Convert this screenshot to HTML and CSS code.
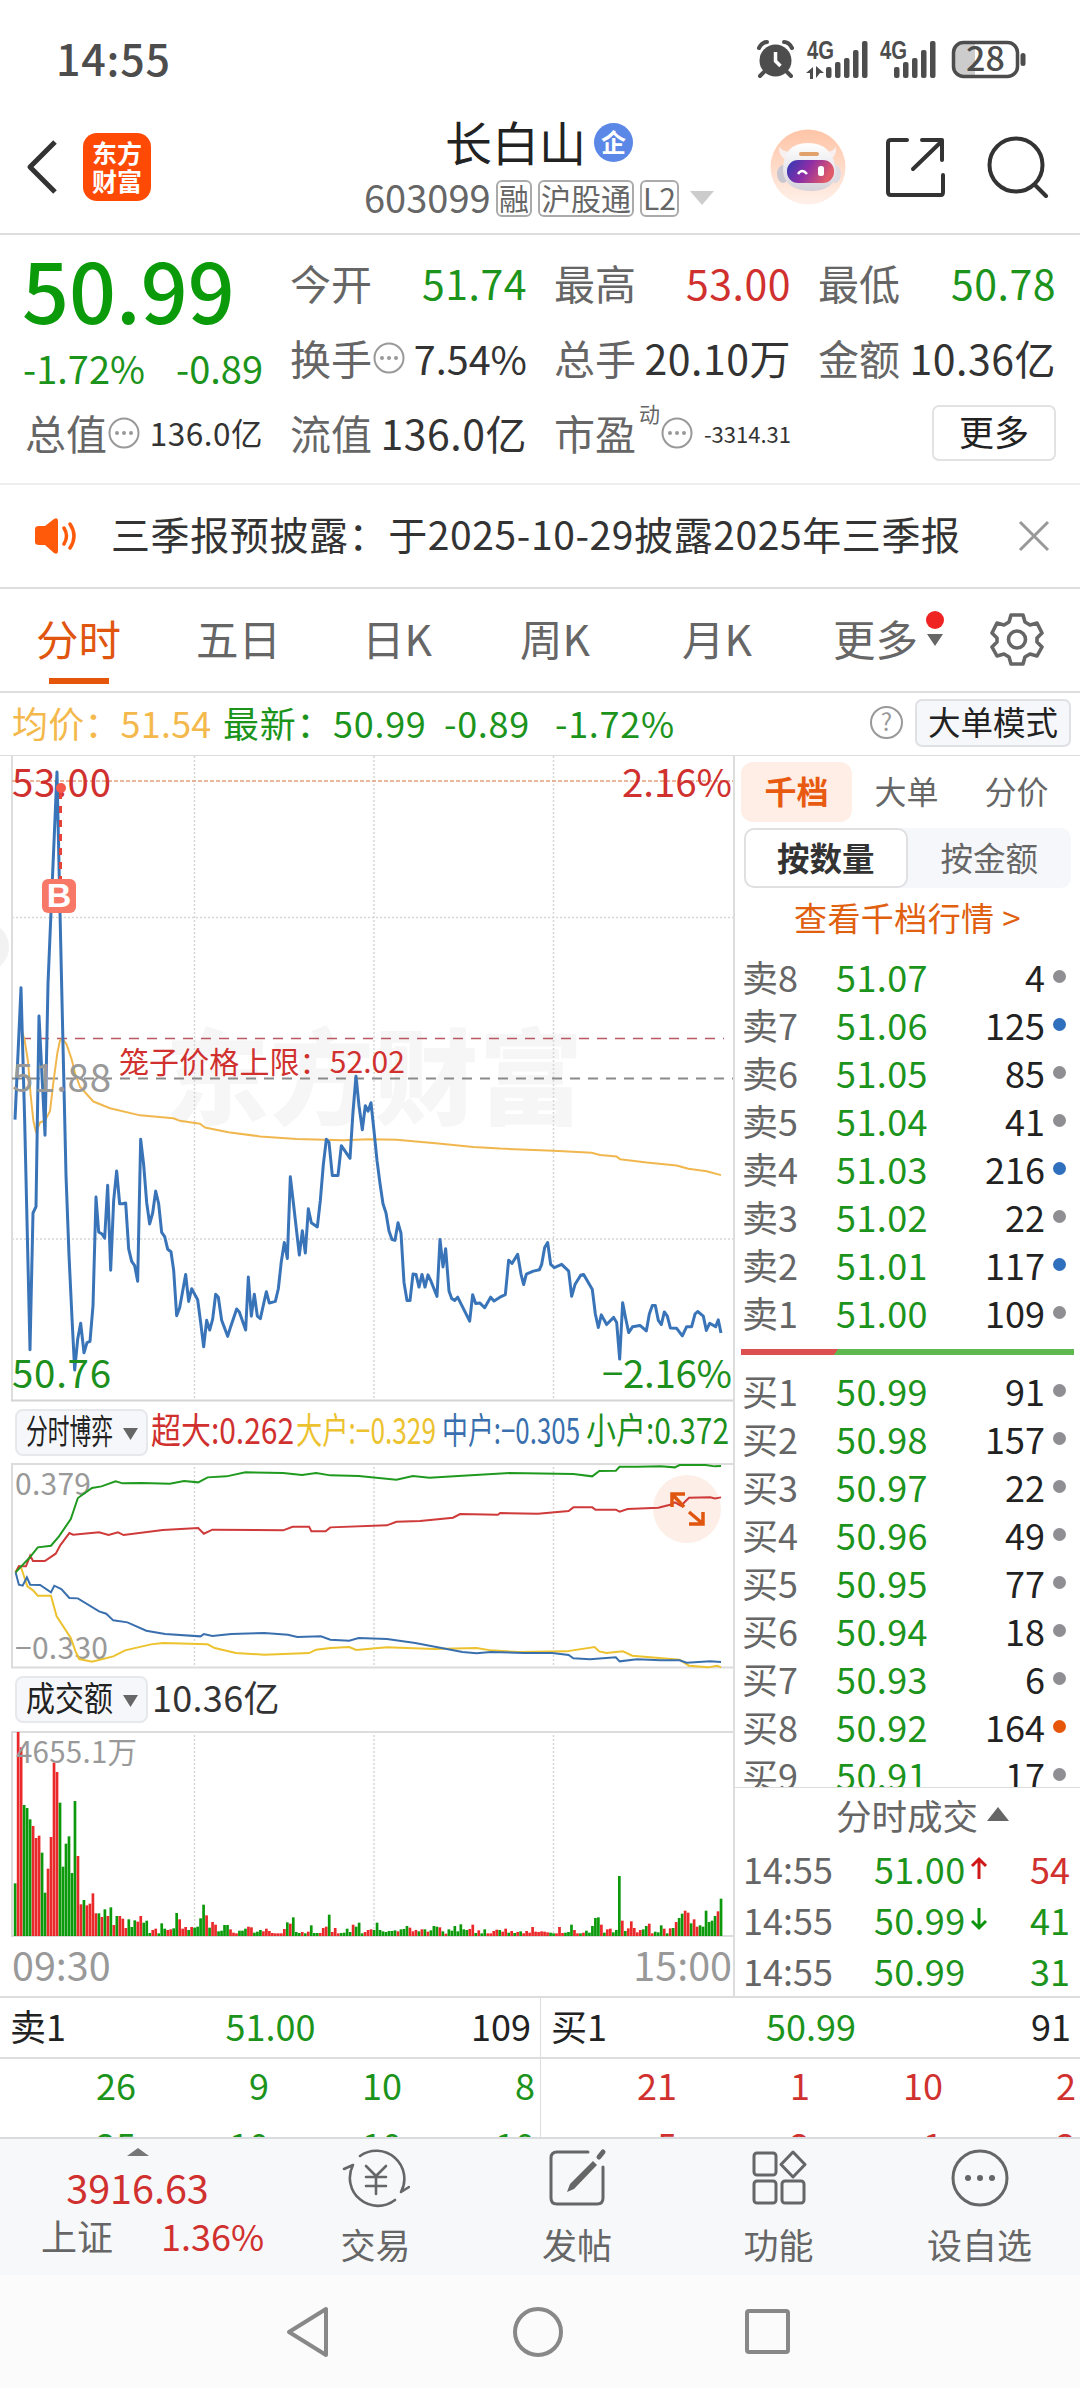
FILE: index.html
```html
<!DOCTYPE html>
<html lang="zh-CN">
<head>
<meta charset="utf-8">
<title>长白山 603099</title>
<link rel="stylesheet" href="styles.css">
</head>
<body>
<div class="status">
  <span class="clock">14:55</span>
  <svg class="status-icons" width="280" height="46" viewBox="0 0 280 46">
    <g fill="#4d4d4d">
      <circle cx="20.500" cy="21.500" r="16"/>
      <g fill="none" stroke="#4d4d4d" stroke-width="4" stroke-linecap="round"><path d="M4 9q3-6 8-6M29 3q5 0 8 6M9 33l-4 4M32 33l4 4"/></g>
      <path d="M20.500 13v9l5 5" fill="none" stroke="#fff" stroke-width="3.500"/>
      <text x="52" y="20" class="net" textLength="27" lengthAdjust="spacingAndGlyphs">4G</text>
      <text x="125" y="20" class="net" textLength="27" lengthAdjust="spacingAndGlyphs">4G</text>
      <path d="M51 34l7-6v12h-3v-6zM61 27l8 7h-4l-4 5z"/>
      <g><rect x="71" y="28" width="5.500" height="11" rx="2"/><rect x="80" y="23" width="5.500" height="16" rx="2"/><rect x="89" y="19" width="5.500" height="20" rx="2"/><rect x="98" y="11" width="5.500" height="28" rx="2"/><rect x="107" y="2" width="5.500" height="37" rx="2"/></g>
      <g><rect x="139" y="28" width="5.500" height="11" rx="2"/><rect x="148" y="23" width="5.500" height="16" rx="2"/><rect x="157" y="19" width="5.500" height="20" rx="2"/><rect x="166" y="11" width="5.500" height="28" rx="2"/><rect x="175" y="2" width="5.500" height="37" rx="2"/></g>
      <path d="M208 4h12v33h-12q-8 0-9-8v-17q1-8 9-8z" fill="#ccc"/>
      <rect x="198.500" y="3.500" width="64" height="34" rx="10" fill="none" stroke="#4d4d4d" stroke-width="3.500"/>
      <rect x="265.500" y="14" width="5" height="13" rx="2.500"/>
      <text x="211" y="32" class="batt" textLength="39">28</text>
    </g>
  </svg>
</div>

<header class="top">
  <div class="top-left">
    <svg width="32" height="56" viewBox="0 0 32 56"><path d="M29 3L4 28l25 25" fill="none" stroke="#333" stroke-width="5" stroke-linejoin="round"/></svg>
    <div class="logo"><span>东方</span><span>财富</span></div>
  </div>
  <div class="top-mid">
    <div class="name">长白山<span class="badge">企</span></div>
    <div class="code"><span class="num">603099</span><i>融</i><i>沪股通</i><i>L2</i><svg width="24" height="16" viewBox="0 0 24 16"><path d="M0 1h24L12 15z" fill="#ccc"/></svg></div>
  </div>
  <div class="top-right">
    <svg width="76" height="76" viewBox="0 0 76 76">
      <defs>
        <linearGradient id="halo" x1="0" y1="0" x2="0" y2="1"><stop offset="0" stop-color="#ffc4a6"/><stop offset="1" stop-color="#fff1ea"/></linearGradient>
        <linearGradient id="visor" x1="0" y1="0" x2="1" y2=".3"><stop offset="0" stop-color="#2b3bb5"/><stop offset=".5" stop-color="#8d2da6"/><stop offset="1" stop-color="#e05a6a"/></linearGradient>
        <linearGradient id="shell" x1="0" y1="0" x2="0" y2="1"><stop offset="0" stop-color="#fff"/><stop offset="1" stop-color="#d5d2da"/></linearGradient>
      </defs>
      <circle cx="38" cy="38" r="37.500" fill="url(#halo)"/>
      <path d="M9 18q0 12 10 13l8-9q-12 3-18-4zM66 18q1 11-8 12l-6-8q9 3 14-4z" fill="#f8f0ef"/>
      <ellipse cx="13" cy="45" rx="6" ry="9" fill="#c9c6d0"/><ellipse cx="65" cy="45" rx="6" ry="9" fill="#dedbe2"/>
      <path d="M13 42q0-28 25-28t28 28q0 19-24 20-27 0-29-20z" fill="url(#shell)"/>
      <rect x="29" y="23" width="20" height="4" rx="2" fill="#e2a06a"/>
      <rect x="17" y="31" width="47" height="23" rx="11" fill="url(#visor)"/>
      <path d="M28 45q4-6 9 0" fill="none" stroke="#fff" stroke-width="2.500"/><rect x="48" y="37" width="6" height="10" rx="2.500" fill="#fff"/>
    </svg>
    <svg class="share" width="60" height="60" viewBox="0 0 60 60"><g fill="none" stroke="#333" stroke-width="4" stroke-linecap="round" stroke-linejoin="round"><path d="M22 3H6q-3 0-3 3v49q0 3 3 3h50q2 0 2-3V38M37 3h20v20M57 4L28 32"/></g></svg>
    <svg class="find" width="62" height="62" viewBox="0 0 62 62"><g fill="none" stroke="#333" stroke-width="4" stroke-linecap="round"><circle cx="29" cy="29" r="26.500"/><path d="M48 49l11 11"/></g></svg>
  </div>
</header>

<section class="quote">
  <div class="last">
    <div class="price">50.99</div>
    <div class="chg"><span>-1.72%</span><span>-0.89</span></div>
  </div>
  <div class="cell"><b>今开</b><em class="g">51.74</em></div>
  <div class="cell"><b>最高</b><em class="r">53.00</em></div>
  <div class="cell"><b>最低</b><em class="g">50.78</em></div>
  <div class="cell"><b>换手</b><svg class="dots" viewBox="0 0 32 32"><use href="#more-dots"/></svg><em class="turn">7.54%</em></div>
  <div class="cell"><b>总手</b><em>20.10万</em></div>
  <div class="cell"><b>金额</b><em>10.36亿</em></div>
  <div class="cell"><b>总值</b><svg class="dots" viewBox="0 0 32 32"><use href="#more-dots"/></svg><em class="mid">136.0亿</em></div>
  <div class="cell"><b>流值</b><em>136.0亿</em></div>
  <div class="cell"><b>市盈</b><sup>动</sup><svg class="dots" viewBox="0 0 32 32"><g id="more-dots" fill="#999"><circle cx="16" cy="16" r="14.500" fill="none" stroke="#999" stroke-width="2"/><circle cx="9" cy="16" r="2"/><circle cx="16" cy="16" r="2"/><circle cx="23" cy="16" r="2"/></g></svg><em class="small">-3314.31</em></div>
  <div class="cell end"><span class="more-btn">更多</span></div>
</section>

<section class="notice">
  <svg width="46" height="38" viewBox="0 0 46 38"><path d="M2 12q0-3 4-3h6L21 2q4-2 4 2v30q0 4-4 2l-9-8H6q-4 0-4-3z" fill="#ff5a0a"/><path d="M31 11q5 8 0 16M37 7q8 12 0 24" fill="none" stroke="#ff5a0a" stroke-width="3.500" stroke-linecap="round"/></svg>
  <p>三季报预披露：于2025-10-29披露2025年三季报</p>
  <svg width="32" height="32" viewBox="0 0 32 32"><path d="M2 2l28 28M30 2L2 30" stroke="#999" stroke-width="3" fill="none"/></svg>
</section>

<nav class="tabs">
  <span class="on">分时</span><span>五日</span><span>日K</span><span>周K</span><span>月K</span>
  <span class="more">更多<svg width="18" height="50" viewBox="0 0 18 50"><circle cx="9" cy="10" r="9" fill="#f02323"/><path d="M1 24h16l-8 12z" fill="#666"/></svg></span>
  <svg class="gear" width="54" height="54" viewBox="0 0 54 54"><g fill="none" stroke="#666" stroke-width="3.600" stroke-linejoin="round"><path d="M21 3h12l2 7 5 3 7-2 5 10-5 5v4l5 5-5 9-7-2-5 3-2 7H21l-2-7-5-3-7 2-5-9 5-5v-4l-5-5 5-10 7 2 5-3z"/><circle cx="27" cy="27.500" r="8.500"/></g></svg>
</nav>

<section class="info">
  <span class="avg">均价：51.54</span><span class="g now">最新：50.99</span><span class="g d1">-0.89</span><span class="g">-1.72%</span>
  <span class="help">?</span><span class="mode">大单模式</span>
</section>

<main class="main">
  <div class="charts">
    <svg class="chart" width="734" height="646" viewBox="0 0 734 646">
      <circle cx="-16" cy="191" r="25" fill="#f2f2f2"/>
      <text x="165" y="361" class="mark" textLength="418">东方财富</text>
      <path d="M194.500 0V644M374 0V644M553.500 0V644M12 161.500H733M12 483H733" class="grid"/>
      <path d="M12 0V645" stroke="#ddd" stroke-width="2"/><path d="M11 644.500H733" stroke="#d4d4d4" stroke-width="2"/>
      <path d="M12 25H733" stroke="#e3a07c" stroke-width="1.500" stroke-dasharray="4 2"/>
      <path d="M21 282.500H724" stroke="#b9595f" stroke-width="1.500" stroke-dasharray="10 8"/>
      <path d="M12 322.500H733" stroke="#8a8a8a" stroke-width="2" stroke-dasharray="10 8"/>
      <g transform="translate(0,-6) scale(.33333,.42092)" fill="none" stroke-linejoin="round">
        <polyline stroke="#f1b74f" stroke-width="2" vector-effect="non-scaling-stroke" points="63,660 74,690 84,740 92,820 100,880 108,908 120,885 135,880 150,858 160,790 172,720 180,690 188,686 200,700 215,735 225,768 240,800 280,835 330,851 420,868 520,875 540,881 600,888 615,897 685,908 780,918 890,924 1030,927 1105,925 1190,926 1315,935 1420,943 1500,947 1660,952 1775,957 1800,962 1850,966 1860,972 1940,980 2030,987 2065,995 2120,1001 2163,1010"/>
        <polyline stroke="#3a74b8" stroke-width="3" vector-effect="non-scaling-stroke" points="45,878 63,565 74,880 90,1425 99,1100 108,1085 117,632 135,915 144,555 153,385 171,52 180,385 189,700 198,1010 207,1200 216,1350 224,1473 233,1400 242,1362 252,1432 261,1408 270,1405 279,1320 288,1062 296,1145 306,1150 314,1160 323,1034 332,1236 341,1070 350,1000 359,1078 368,1078 377,1076 386,1185 395,1215 404,1225 413,1262 422,925 431,985 440,1075 449,1126 458,1100 467,1048 476,1078 485,1146 494,1156 503,1186 513,1192 521,1236 530,1344 539,1325 557,1246 566,1310 575,1280 593,1306 602,1360 611,1418 620,1355 629,1378 638,1352 647,1293 655,1300 665,1355 683,1393 692,1370 710,1328 718,1335 737,1378 745,1252 754,1345 763,1293 772,1345 781,1351 799,1287 808,1314 826,1310 835,1280 844,1215 853,1170 862,1208 871,1014 880,1075 898,1200 907,1142 916,1195 925,1090 934,1123 952,1133 961,1070 970,985 979,925 987,932 997,1011 1014,1011 1024,940 1050,970 1059,860 1068,775 1077,845 1087,902 1096,845 1104,858 1113,838 1122,905 1131,975 1140,1030 1149,1078 1158,1100 1167,1143 1176,1163 1185,1165 1194,1123 1203,1148 1212,1265 1221,1308 1230,1308 1239,1245 1248,1246 1257,1276 1266,1246 1275,1276 1284,1247 1293,1262 1311,1298 1320,1163 1329,1228 1337,1185 1347,1285 1355,1303 1364,1308 1373,1300 1409,1357 1418,1294 1427,1315 1440,1314 1454,1325 1472,1300 1482,1309 1500,1300 1516,1294 1526,1212 1536,1220 1553,1198 1563,1245 1571,1270 1579,1245 1600,1238 1618,1235 1625,1222 1634,1182 1643,1170 1652,1222 1663,1230 1685,1222 1706,1238 1715,1298 1725,1270 1742,1248 1751,1246 1777,1282 1786,1340 1795,1372 1804,1342 1820,1365 1841,1348 1850,1360 1859,1447 1868,1313 1877,1350 1886,1384 1898,1370 1920,1367 1939,1380 1948,1340 1957,1320 1966,1320 1975,1355 1984,1365 1993,1335 2002,1345 2011,1373 2030,1374 2047,1392 2060,1370 2075,1370 2085,1340 2093,1334 2110,1345 2119,1379 2129,1362 2147,1370 2155,1354 2163,1385"/>
      </g>
      <text x="12" y="41" class="lab" fill="#d0312f" textLength="99">53.00</text>
      <text x="732" y="41" class="lab" fill="#d0312f" text-anchor="end" textLength="110">2.16%</text>
      <text x="12" y="336" class="lab" fill="#999" textLength="99">51.88</text>
      <text x="12" y="632" class="lab" fill="#1c8f1c" textLength="99">50.76</text>
      <text x="732" y="632" class="lab" fill="#1c8f1c" text-anchor="end" textLength="130">−2.16%</text>
      <text x="119" y="317" class="cage" fill="#d0312f" textLength="286">笼子价格上限：52.02</text>
      <path d="M60.500 36V123" stroke="#e5423a" stroke-width="3" stroke-dasharray="7 7"/>
      <circle cx="61" cy="32" r="5" fill="#f5594b"/>
      <rect x="42" y="123" width="34" height="34" rx="6" fill="#f87868"/>
      <text x="59" y="151" class="bmark" text-anchor="middle">B</text>
    </svg>

    <div class="legend">
      <span class="chip"><svg width="128" height="44" viewBox="0 0 128 44"><text x="9" y="33" font-size="34" fill="#222" textLength="87" lengthAdjust="spacingAndGlyphs">分时博弈</text><path d="M106 17h15l-7.500 12z" fill="#666"/></svg></span>
      <svg width="582" height="60" viewBox="0 0 582 60" font-size="36">
        <text x="1" y="41" fill="#d0312f" textLength="143" lengthAdjust="spacingAndGlyphs">超大:0.262</text>
        <text x="146" y="41" fill="#ecc22f" textLength="140" lengthAdjust="spacingAndGlyphs">大户:−0.329</text>
        <text x="292" y="41" fill="#3a6fae" textLength="138" lengthAdjust="spacingAndGlyphs">中户:−0.305</text>
        <text x="436" y="41" fill="#1c8f1c" textLength="143" lengthAdjust="spacingAndGlyphs">小户:0.372</text>
      </svg>
    </div>

    <svg class="chart" width="734" height="206" viewBox="0 0 734 206">
      <path d="M194.500 0V204M374 0V204M553.500 0V204" class="grid"/>
      <path d="M733 1H12V204.500H733" fill="none" stroke="#dcdcdc" stroke-width="2"/>
      <text x="15" y="32" font-size="30" fill="#999" textLength="76">0.379</text>
      <text x="15" y="196" font-size="30" fill="#999" textLength="93">−0.330</text>
      <circle cx="687" cy="46" r="34" fill="#fdeee7"/>
      <g transform="translate(0,-73.300) scale(.4719,.33333)" fill="none">
        <polyline vector-effect="non-scaling-stroke" stroke-width="2" stroke="#ecc22f" points="33,548 40,530 45,535 58,590 70,602 80,618 108,618 120,680 150,745 160,785 168,808 195,816 240,800 265,782 320,764 345,760 440,764 455,775 500,790 560,795 655,790 670,780 700,775 740,772 755,781 820,773 920,778 1010,775 1040,782 1100,787 1200,785 1260,772 1270,785 1285,790 1320,785 1340,798 1440,810 1460,828 1500,833 1520,828 1528,833"/>
        <polyline vector-effect="non-scaling-stroke" stroke-width="2" stroke="#3a6fae" points="33,548 40,585 48,588 57,563 64,585 85,586 108,608 115,588 130,598 147,625 165,626 210,665 225,672 240,692 270,698 310,723 350,733 425,740 432,733 450,739 490,733 560,730 610,735 630,742 680,740 700,750 740,753 760,745 820,748 880,760 980,787 1010,791 1040,787 1110,790 1170,790 1205,796 1215,806 1250,809 1305,803 1313,815 1350,809 1400,812 1440,812 1455,819 1505,815 1528,817"/>
        <polyline vector-effect="non-scaling-stroke" stroke-width="2" stroke="#cf3a3a" points="33,548 40,530 55,530 64,498 70,514 95,514 118,492 128,466 147,430 155,435 210,428 230,436 250,428 262,436 345,421 420,415 432,432 450,420 600,422 620,411 655,411 660,425 690,425 700,413 820,407 840,396 890,394 960,384 975,373 1055,375 1060,370 1140,372 1205,364 1215,353 1255,353 1262,360 1305,360 1313,366 1330,358 1395,354 1420,345 1430,338 1443,348 1460,324 1505,323 1515,326 1528,323"/>
        <polyline vector-effect="non-scaling-stroke" stroke-width="2" stroke="#1f9a1f" points="33,548 45,530 62,505 80,473 108,468 125,440 150,388 165,325 195,295 215,290 245,275 260,281 300,280 360,282 390,274 420,278 440,263 480,260 520,248 600,250 640,256 670,250 700,257 760,259 840,270 875,259 910,264 980,258 1080,250 1215,253 1255,260 1270,244 1305,243 1313,231 1350,231 1400,230 1430,233 1440,226 1495,226 1515,230 1528,229"/>
      </g>
      <path d="M672 44V31h13M673 32l11 12M703 49v12h-14M702 60l-13-11" fill="none" stroke="#e0560f" stroke-width="3.500"/>
    </svg>

    <div class="legend turnover">
      <span class="chip"><svg width="128" height="44" viewBox="0 0 128 44"><text x="9" y="33" font-size="34" fill="#222" textLength="87" lengthAdjust="spacingAndGlyphs">成交额</text><path d="M106 17h15l-7.500 12z" fill="#666"/></svg></span>
      <span class="amount">10.36亿</span>
    </div>

    <svg class="chart" width="734" height="206" viewBox="0 0 734 206">
      <path d="M194.500 0V204M374 0V204M553.500 0V204" class="grid"/>
      <path d="M733 1H12V205H733" fill="none" stroke="#dcdcdc" stroke-width="2"/>
      <g id="bars"></g>
      <text x="16" y="32" font-size="29.500" fill="#999" textLength="121">4655.1万</text>
    </svg>
    <div class="axis"><span>09:30</span><span>15:00</span></div>
  </div>

  <aside class="book">
    <div class="modes"><span class="on">千档</span><span>大单</span><span>分价</span></div>
    <div class="seg"><span class="on">按数量</span><span>按金额</span></div>
    <div class="link">查看千档行情 &gt;</div>
    <div class="rows">
      <div class="row"><b>卖8</b><em>51.07</em><i>4</i><u></u></div>
      <div class="row"><b>卖7</b><em>51.06</em><i>125</i><u class="blue"></u></div>
      <div class="row"><b>卖6</b><em>51.05</em><i>85</i><u></u></div>
      <div class="row"><b>卖5</b><em>51.04</em><i>41</i><u></u></div>
      <div class="row"><b>卖4</b><em>51.03</em><i>216</i><u class="blue"></u></div>
      <div class="row"><b>卖3</b><em>51.02</em><i>22</i><u></u></div>
      <div class="row"><b>卖2</b><em>51.01</em><i>117</i><u class="blue"></u></div>
      <div class="row"><b>卖1</b><em>51.00</em><i>109</i><u></u></div>
    </div>
    <div class="ratio"></div>
    <div class="rows buy">
      <div class="row"><b>买1</b><em>50.99</em><i>91</i><u></u></div>
      <div class="row"><b>买2</b><em>50.98</em><i>157</i><u></u></div>
      <div class="row"><b>买3</b><em>50.97</em><i>22</i><u></u></div>
      <div class="row"><b>买4</b><em>50.96</em><i>49</i><u></u></div>
      <div class="row"><b>买5</b><em>50.95</em><i>77</i><u></u></div>
      <div class="row"><b>买6</b><em>50.94</em><i>18</i><u></u></div>
      <div class="row"><b>买7</b><em>50.93</em><i>6</i><u></u></div>
      <div class="row"><b>买8</b><em>50.92</em><i>164</i><u class="orange"></u></div>
      <div class="row"><b>买9</b><em>50.91</em><i>17</i><u></u></div>
    </div>
    <div class="deals-head">分时成交<svg width="22" height="14" viewBox="0 0 22 14"><path d="M0 14h22L11 0z" fill="#666"/></svg></div>
    <div class="deal"><b>14:55</b><em>51.00</em><svg width="18" height="24" viewBox="0 0 18 24"><path d="M9 23V3M2 10l7-7 7 7" fill="none" stroke="#d01818" stroke-width="3"/></svg><i class="r">54</i></div>
    <div class="deal"><b>14:55</b><em>50.99</em><svg width="18" height="24" viewBox="0 0 18 24"><path d="M9 1v20M2 14l7 7 7-7" fill="none" stroke="#0c940c" stroke-width="3"/></svg><i class="g">41</i></div>
    <div class="deal"><b>14:55</b><em>50.99</em><svg width="18" height="24"></svg><i class="g">31</i></div>
  </aside>
</main>

<section class="level">
  <div class="side">
    <div class="lv-head"><span>卖1</span><span class="g">51.00</span><span>109</span></div>
    <div class="queue g"><span>26</span><span>9</span><span>10</span><span>8</span><span>25</span><span>10</span><span>10</span><span>10</span></div>
  </div>
  <div class="side">
    <div class="lv-head"><span>买1</span><span class="g">50.99</span><span>91</span></div>
    <div class="queue r"><span>21</span><span>1</span><span>10</span><span>2</span><span>5</span><span>2</span><span>1</span><span>2</span></div>
  </div>
</section>

<footer class="dock">
  <div class="index">
    <svg width="22" height="8" viewBox="0 0 22 8"><path d="M0 8h22L11 0z" fill="#777"/></svg>
    <div class="pts">3916.63</div>
    <div class="idx-row"><span>上证</span><span class="r">1.36%</span></div>
  </div>
  <div class="item">
    <svg width="68" height="60" viewBox="0 0 68 60"><g fill="none" stroke="#666" stroke-width="2.600" stroke-linecap="round" stroke-linejoin="round"><path d="M18 8A28 28 0 0 1 59 44l8-5M53 52A28 28 0 0 1 11 17l-9 4"/><path d="M24 18l10 10 10-10M24 29h20M24 38h20M34 28v18"/></g></svg>
    <span>交易</span>
  </div>
  <div class="item">
    <svg width="60" height="60" viewBox="0 0 60 60"><g fill="none" stroke="#666" stroke-width="3" stroke-linecap="round"><path d="M41 4H10q-6 0-6 6v40q0 6 6 6h40q6 0 6-6V19"/><path d="M52 9l4-5" stroke-width="5"/></g><path d="M46 13l4 4-23 24-7 3 3-8z" fill="#666"/></svg>
    <span>发帖</span>
  </div>
  <div class="item">
    <svg width="56" height="56" viewBox="0 0 56 56"><g fill="none" stroke="#666" stroke-width="3" stroke-linejoin="round"><rect x="3" y="3" width="22" height="22" rx="3"/><rect x="3" y="31" width="22" height="22" rx="3"/><rect x="31" y="31" width="22" height="22" rx="3"/><path d="M42 2l12 12.500L42 27 30 14.500z"/></g></svg>
    <span>功能</span>
  </div>
  <div class="item">
    <svg width="58" height="58" viewBox="0 0 58 58"><circle cx="29" cy="29" r="27" fill="none" stroke="#666" stroke-width="3"/><g fill="#666"><circle cx="17" cy="29" r="3"/><circle cx="29" cy="29" r="3"/><circle cx="41" cy="29" r="3"/></g></svg>
    <span>设自选</span>
  </div>
</footer>

<div class="sysnav">
  <svg width="46" height="54" viewBox="0 0 46 54"><path d="M41 4v46L4 27z" fill="none" stroke="#888" stroke-width="4" stroke-linejoin="round"/></svg>
  <svg width="52" height="52" viewBox="0 0 52 52"><circle cx="26" cy="26" r="23" fill="none" stroke="#888" stroke-width="4"/></svg>
  <svg width="46" height="48" viewBox="0 0 46 48"><rect x="2" y="3" width="41" height="41" rx="2" fill="none" stroke="#888" stroke-width="4"/></svg>
</div>
<script src="bars.js"></script>
</body>
</html>
```
FILE: styles.css
```css
* { box-sizing: border-box; }
body {
  margin: 0;
  width: 1080px;
  height: 2388px;
  overflow: hidden;
  background: #fff;
  color: #333;
  font-family: "Noto Sans CJK SC", sans-serif;
  font-size: 36px;
  line-height: 1;
}
svg { display: block; flex: none; }
b, i, em, u { font-weight: 400; font-style: normal; text-decoration: none; }
span, b, em, i { white-space: nowrap; }
.g { color: #1c941c; }
.r { color: #d0312f; }

.status { height: 103px; display: flex; justify-content: space-between; padding: 36px 40px 0 56px; }
.clock { font-size: 43px; line-height: 43px; letter-spacing: .8px; color: #4d4d4d; font-weight: 500; }
.status-icons { margin-top: 3px; margin-right: 5px; }
.net { font-size: 25px; font-family: "Liberation Sans", sans-serif; font-weight: 700; }
.batt { font-size: 34px; font-weight: 500; }

.top { height: 132px; border-bottom: 2px solid #ddd; display: grid; grid-template-columns: 360px 358px 362px; }
.top-left { display: flex; padding: 30px 0 0 26px; gap: 25px; }
.top-left > svg { margin-top: 6px; }
.logo { width: 68px; height: 68px; border-radius: 14px; background: #ff4a05; color: #fff; display: flex; flex-direction: column; align-items: center; padding-top: 5px; font-size: 25px; font-weight: 700; line-height: 28px; }
.top-mid { display: flex; flex-direction: column; align-items: center; }
.name { display: flex; align-items: center; gap: 8px; font-size: 47px; line-height: 60px; height: 73px; padding-top: 3px; color: #222; }
.badge { width: 39px; height: 39px; border-radius: 50%; background: #5b87e6; color: #fff; font-size: 25px; line-height: 36px; font-weight: 700; text-align: center; margin-top: 3px; }
.code { display: flex; align-items: center; gap: 6px; color: #666; height: 44px; }
.code .num { font-size: 38px; margin: -3px 0 0; width: 126px; }
.code i { font-size: 30px; height: 37px; line-height: 31px; border: 2px solid #aaa; border-radius: 6px; padding: 0 1px; min-width: 36px; text-align: center; }
.code svg { margin-left: 5px; }
.top-right { display: flex; padding: 26px 0 0 52px; }
.share { margin: 8px 0 0 39px; }
.find { margin: 7px 0 0 42px; }

.quote { height: 250px; border-bottom: 2px solid #eee; padding: 10px 24px 0 25px; display: grid; grid-template-columns: 238px 237px 237px 238px; grid-auto-rows: 75px; column-gap: 27px; }
.last { grid-row: span 2; color: #0a9a0a; }
.price { font-size: 82.5px; font-weight: 500; line-height: 86px; margin-left: -3px; }
.chg { display: flex; justify-content: space-between; font-size: 38px; line-height: 74px; color: #1c941c; margin-left: -2px; }
.cell { display: flex; align-items: center; font-size: 41px; }
.cell b { color: #666; }
.cell em { margin-left: auto; letter-spacing: .5px; }
.cell .turn { font-size: 39.5px; letter-spacing: 0; }
.cell sup { font-size: 21px; color: #666; align-self: flex-start; margin-top: 6px; padding-left: 3px; line-height: 24px; }
.dots { width: 32px; height: 32px; margin: 0 0 0 1px; }
.cell .mid { font-size: 31.5px; }
.cell .small { font-size: 22px; letter-spacing: 0; }
.end { justify-content: flex-end; }
.more-btn { width: 124px; height: 56px; border: 2px solid #e2e2e2; border-radius: 7px; font-size: 35px; line-height: 48px; text-align: center; color: #222; }

.notice { height: 104px; border-bottom: 2px solid #ddd; display: flex; align-items: center; padding: 0 30px 0 33px; }
.notice p { margin: -6px auto 0 32px; font-size: 39px; letter-spacing: .6px; white-space: nowrap; }

.tabs { height: 104px; border-bottom: 2px solid #ddd; display: flex; align-items: center; font-size: 42.5px; color: #666; padding: 0 0 0 36px; }
.tabs span { line-height: 95px; height: 100px; width: 160px; }
.tabs span:nth-child(3) { margin-left: 6px; width: 158px; }
.tabs span:nth-child(4) { width: 162px; }
.tabs span:nth-child(5) { width: 151px; }
.tabs .on { color: #e0560f; background: linear-gradient(#e6560a, #e6560a) 13px 88px / 60px 6px no-repeat; }
.tabs .more { display: flex; width: 156px; gap: 8px; }
.tabs .more svg { margin-top: 20px; }
.gear { margin-top: -2px; margin-left: 1px; }

.info { height: 63px; border-bottom: 1px solid #ddd; display: flex; align-items: center; font-size: 36px; padding: 0 9px 3px 12px; }
.info .g, .info .avg { margin-top: -2px; letter-spacing: .7px; }
.info .avg { color: #f4b94c; width: 211px; letter-spacing: .2px; }
.info .now { width: 221px; }
.info .d1 { width: 111px; }
.help { margin-left: auto; width: 33px; height: 33px; border: 2px solid #999; border-radius: 50%; font-size: 24px; line-height: 26px; color: #999; text-align: center; }
.mode { margin-left: 12px; width: 156px; height: 48px; border: 2px solid #dfe1e5; border-radius: 7px; background: #f6f7fa; color: #222; font-size: 32.5px; line-height: 40px; text-align: center; }

.main { height: 1242px; border-bottom: 2px solid #ddd; display: grid; grid-template-columns: 735px 345px; }
.charts { border-right: 2px solid #ddd; }
.grid { fill: none; stroke: #d6d6d6; stroke-width: 1.5; stroke-dasharray: 2 2; }
.mark { font-size: 104px; font-weight: 900; fill: #f6f6f6; }
.lab { font-size: 38.5px; }
.cage { font-size: 30px; }
.bmark { font-size: 34px; font-family: "Liberation Sans", sans-serif; font-weight: 700; fill: #fff; }
.legend { height: 61px; display: flex; align-items: center; padding-left: 15px; gap: 2px; margin-right: -4px; }
.chip { width: 133px; height: 47px; margin-top: -1px; border: 2px solid #e6e8ec; border-radius: 8px; background: #f6f7fa; }
.turnover { height: 62px; gap: 4px; }
.amount { font-size: 36px; margin-top: -8px; letter-spacing: .3px; }
.axis { height: 58px; display: flex; justify-content: space-between; padding: 7px 1px 0 12px; font-size: 39.5px; color: #999; }

.book { padding-top: 6px; overflow: hidden; }
.modes { display: flex; padding-left: 6px; height: 60px; font-size: 32px; color: #666; line-height: 56px; }
.modes span { width: 111px; text-align: center; }
.modes .on { background: #feeee6; color: #e85a10; border-radius: 12px; font-weight: 700; }
.modes span + span { margin-left: -1px; }
.seg { display: flex; margin: 6px 9px 0; width: 327px; height: 60px; background: #f6f7fa; border-radius: 10px; font-size: 32.5px; line-height: 53px; color: #666; }
.seg span { flex: 1; text-align: center; border: 2px solid transparent; border-radius: 10px; }
.seg .on { background: #fff; border-color: #e0e0e2; color: #333; font-weight: 700; }
.link { height: 65px; text-align: center; font-size: 33px; line-height: 59px; letter-spacing: .4px; color: #e0600f; }
.row { display: grid; grid-template-columns: 93px 130px 87px 13px; align-items: center; height: 48px; padding-left: 8px; padding-bottom: 2px; font-size: 36px; }
.row b { color: #666; margin-left: -1px; }
.row em { color: #1c941c; letter-spacing: .4px; }
.row i { color: #222; text-align: right; width: 79px; }
.row u { width: 13px; height: 13px; border-radius: 50%; background: #8e8e93; }
.row .blue { background: #2e70bd; }
.row .orange { background: #e6560a; }
.ratio { height: 6px; margin: 12px 6px; background: linear-gradient(125deg, #dd5050 79px, #60b850 80px); }
.buy { height: 421px; overflow: hidden; border-bottom: 1px solid #ddd; }
.deals-head { height: 54px; display: flex; align-items: center; justify-content: center; gap: 9px; padding-left: 30px; font-size: 35.5px; color: #666; line-height: 50px; }
.deals-head svg { margin-top: -3px; }
.deal { display: grid; grid-template-columns: 131px 96px 18px 82px; align-items: center; height: 51px; padding-left: 8px; }
.deal b { color: #666; }
.deal em { color: #1c941c; letter-spacing: .3px; }
.deal i { text-align: right; }

.level { height: 141px; overflow: hidden; display: grid; grid-template-columns: 1fr 1fr; border-bottom: 2px solid #d8dbe0; }
.side + .side { border-left: 1px solid #ddd; }
.lv-head { height: 61px; border-bottom: 2px solid #ddd; display: grid; grid-template-columns: 1fr auto 1fr; align-items: center; padding: 0 9px 6px 10px; color: #222; }
.lv-head :last-child { text-align: right; }
.queue { display: grid; grid-template-columns: 136px 133px 133px 133px; grid-auto-rows: 60px; align-items: center; text-align: right; margin-top: -5px; }

.dock { height: 136px; background: #f7f8fa; display: grid; grid-template-columns: 275px 201px 202px 201px 201px; color: #666; }
.index { display: flex; flex-direction: column; align-items: center; padding-top: 9px; }
.pts { color: #d0312f; font-size: 39.5px; line-height: 61px; }
.idx-row { display: flex; gap: 48px; font-size: 36px; padding-left: 30px; }
.item { display: flex; flex-direction: column; align-items: center; font-size: 35px; }
.item svg { height: 60px; margin-top: 9px; }
.item span { margin-top: 18px; }

.sysnav { height: 114px; background: #fbfbfb; display: flex; align-items: center; padding-left: 285px; gap: 181px; }
```
FILE: bars.js
```js
// Per-minute turnover: height in units of 1/3 px, negative values fell.
const turnover = [
  -158,612,566,-393,-384,-350,330,294,301,-250,-130,202,297,520,492,-400,-208,-277,-299,-189,
  -405,240,95,-108,92,97,128,68,-68,57,-80,60,-86,33,-60,60,52,24,-50,-27,
  -47,43,60,-40,-46,-9,18,22,-8,-38,-22,18,20,-23,-69,50,22,27,-18,27,
  -25,-28,-53,-94,62,-25,42,34,-14,-16,-33,-33,20,10,8,-16,-16,-22,28,26,
  -10,-13,-18,14,22,15,9,8,8,8,21,-41,37,-56,-12,-9,12,-8,13,-32,
  -9,-9,9,24,28,-64,12,24,8,-9,-10,-22,-12,34,-28,-40,-8,12,18,20,
  -18,-40,-18,-14,-12,-15,-15,-17,14,-20,-21,-30,25,14,18,-14,20,-20,13,-17,
  -30,-28,26,-14,7,-20,-16,-30,-14,-35,-20,-18,21,34,-9,17,-8,-20,8,8,
  15,19,-18,13,22,-10,15,-9,12,-14,8,15,10,27,13,12,14,13,11,-10,
  -8,8,27,9,-10,-12,-34,18,8,-8,10,-16,-10,-30,-54,-56,34,-10,20,22,
  -11,-18,-180,46,-15,23,44,24,11,18,-20,-30,37,8,-13,-11,-32,22,-8,23,
  -24,42,-54,-67,76,70,-38,50,28,-32,-28,-76,-42,-46,-60,74,-112
];
const layer = document.getElementById('bars');
turnover.forEach((v, i) => {
  const bar = document.createElementNS('http://www.w3.org/2000/svg', 'rect');
  const h = Math.abs(v) / 3;
  bar.setAttribute('x', (13.8 + i * 2.991).toFixed(2));
  bar.setAttribute('y', (205 - h).toFixed(2));
  bar.setAttribute('width', 2.7);
  bar.setAttribute('height', h.toFixed(2));
  bar.setAttribute('fill', v < 0 ? '#0c9a0c' : '#ea2a2a');
  layer.appendChild(bar);
});
```
